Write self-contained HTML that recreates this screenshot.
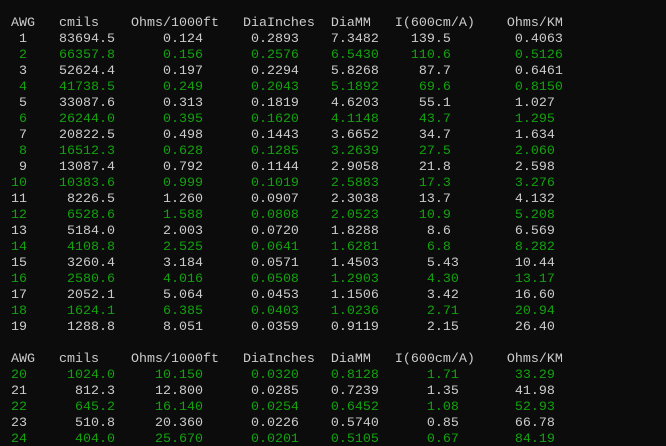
<!DOCTYPE html>
<html><head><meta charset="utf-8"><style>
html,body{margin:0;padding:0;background:#0c0c0c;width:666px;height:446px;overflow:hidden}
pre{margin:0;padding:16px 0 0 11px;font-family:"Liberation Mono",monospace;font-size:13.333px;line-height:16px;color:#cccccc}
.g{color:#13a10e}
</style></head><body><pre>AWG   cmils    Ohms/1000ft   DiaInches  DiaMM   I(600cm/A)    Ohms/KM
 1    83694.5      0.124      0.2893    7.3482    139.5        0.4063
<span class="g"> 2    66357.8      0.156      0.2576    6.5430    110.6        0.5126</span>
 3    52624.4      0.197      0.2294    5.8268     87.7        0.6461
<span class="g"> 4    41738.5      0.249      0.2043    5.1892     69.6        0.8150</span>
 5    33087.6      0.313      0.1819    4.6203     55.1        1.027
<span class="g"> 6    26244.0      0.395      0.1620    4.1148     43.7        1.295</span>
 7    20822.5      0.498      0.1443    3.6652     34.7        1.634
<span class="g"> 8    16512.3      0.628      0.1285    3.2639     27.5        2.060</span>
 9    13087.4      0.792      0.1144    2.9058     21.8        2.598
<span class="g">10    10383.6      0.999      0.1019    2.5883     17.3        3.276</span>
11     8226.5      1.260      0.0907    2.3038     13.7        4.132
<span class="g">12     6528.6      1.588      0.0808    2.0523     10.9        5.208</span>
13     5184.0      2.003      0.0720    1.8288      8.6        6.569
<span class="g">14     4108.8      2.525      0.0641    1.6281      6.8        8.282</span>
15     3260.4      3.184      0.0571    1.4503      5.43       10.44
<span class="g">16     2580.6      4.016      0.0508    1.2903      4.30       13.17</span>
17     2052.1      5.064      0.0453    1.1506      3.42       16.60
<span class="g">18     1624.1      6.385      0.0403    1.0236      2.71       20.94</span>
19     1288.8      8.051      0.0359    0.9119      2.15       26.40

AWG   cmils    Ohms/1000ft   DiaInches  DiaMM   I(600cm/A)    Ohms/KM
<span class="g">20     1024.0     10.150      0.0320    0.8128      1.71       33.29</span>
21      812.3     12.800      0.0285    0.7239      1.35       41.98
<span class="g">22      645.2     16.140      0.0254    0.6452      1.08       52.93</span>
23      510.8     20.360      0.0226    0.5740      0.85       66.78
<span class="g">24      404.0     25.670      0.0201    0.5105      0.67       84.19</span>
</pre></body></html>
